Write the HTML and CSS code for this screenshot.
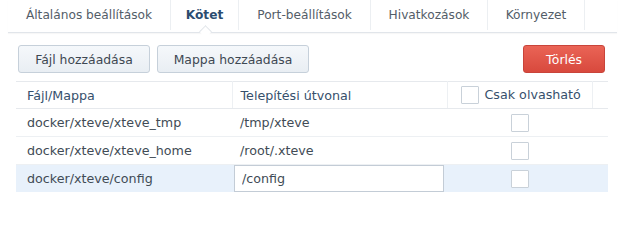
FILE: index.html
```html
<!DOCTYPE html>
<html>
<head>
  <title>Kötet</title>
  <link rel="stylesheet" href="styles.css">
</head>
<body>
  <div class="tabs">
    <div class="tab">Általános beállítások</div>
    <div class="tab active">Kötet</div>
    <div class="tab">Port-beállítások</div>
    <div class="tab">Hivatkozások</div>
    <div class="tab">Környezet</div>
  </div>

  <div class="content">
    <div class="toolbar">
      <button class="btn btn-file">Fájl hozzáadása</button>
      <button class="btn btn-folder">Mappa hozzáadása</button>
      <span class="spacer"></span>
      <button class="btn btn-red">Törlés</button>
    </div>

    <table class="grid">
      <colgroup>
        <col class="col-file">
        <col class="col-path">
        <col class="col-ro">
        <col class="col-end">
      </colgroup>
      <thead>
        <tr>
          <th>Fájl/Mappa</th>
          <th class="path">Telepítési útvonal</th>
          <th class="ro"><span class="check"></span>Csak olvasható</th>
          <th class="end"></th>
        </tr>
      </thead>
      <tbody>
        <tr>
          <td>docker/xteve/xteve_tmp</td>
          <td class="path">/tmp/xteve</td>
          <td class="center"><span class="check"></span></td>
          <td></td>
        </tr>
        <tr>
          <td>docker/xteve/xteve_home</td>
          <td class="path">/root/.xteve</td>
          <td class="center"><span class="check"></span></td>
          <td></td>
        </tr>
        <tr class="selected">
          <td>docker/xteve/config</td>
          <td class="edit"><input class="field" type="text" value="/config"></td>
          <td class="center"><span class="check"></span></td>
          <td></td>
        </tr>
      </tbody>
    </table>
  </div>
</body>
</html>
```

FILE: styles.css
```css
body {
  margin: 0;
  background: #fff;
  font-family: "DejaVu Sans", Verdana, sans-serif;
  font-size: 12px;
  color: #414b55;
}

/* tabs */
.tabs {
  display: flex;
  margin: 0 7px 0 8px;
  height: 32px;
  border-bottom: 1px solid #e1e5ea;
  box-shadow: 0 1px 1px rgba(0, 0, 0, 0.03);
}
.tab {
  position: relative;
  display: flex;
  align-items: center;
  justify-content: center;
  height: 30px;
  border-right: 1px solid #eceff2;
  color: #535d68;
  font-size: 12.2px;
}
.tab:nth-child(1) { width: 162px; }
.tab:nth-child(2) { width: 67px; }
.tab:nth-child(3) { width: 131px; }
.tab:nth-child(4) { width: 116px; }
.tab:nth-child(5) { width: 96px; }
.tab.active {
  font-weight: bold;
  color: #2b4c70;
}
.tab.active::after {
  content: "";
  position: absolute;
  left: 50%;
  bottom: -6px;
  width: 8px;
  height: 8px;
  margin-left: -4px;
  background: #fff;
  border-left: 1px solid #e1e5ea;
  border-top: 1px solid #e1e5ea;
  transform: rotate(45deg);
}

.content {
  margin: 0 16px;
}

/* toolbar */
.toolbar {
  display: flex;
  gap: 7px;
  margin: 12px 3px 8px 2px;
}
.spacer { flex: 1; }
.btn {
  height: 28px;
  padding: 0 10px;
  border: 1px solid #c6d0da;
  border-radius: 3px;
  background: linear-gradient(#f5f8fb, #e9eef3);
  font-family: inherit;
  font-size: 12.4px;
  color: #3e4852;
}
.btn-file { width: 132px; }
.btn-folder { width: 152px; }
.btn-red {
  width: 82px;
  border-color: #c9443a;
  background: linear-gradient(#ea6456, #d8493d);
  color: #fff;
}

/* grid */
.grid {
  width: 592px;
  border-collapse: collapse;
  table-layout: fixed;
  border-top: 1px solid #e6e9ed;
  font-size: 12.7px;
}
.col-file { width: 216px; }
.col-path { width: 215px; }
.col-ro { width: 145px; }
.col-end { width: 16px; }
.grid th,
.grid td {
  height: 27px;
  padding: 0 0 0 11px;
  border-bottom: 1px solid #edf0f3;
  text-align: left;
  font-weight: normal;
  white-space: nowrap;
  overflow: hidden;
}
.grid th {
  height: 26px;
  color: #36506c;
  border-bottom-color: #e6e9ed;
  border-right: 1px solid #edf0f3;
}
.grid th.end { border-right: none; }
.grid .path { padding-left: 8px; }
.grid th.ro { padding-left: 13px; }
.grid th .check {
  margin-right: 6px;
}
.check {
  display: inline-block;
  width: 16px;
  height: 16px;
  border: 1px solid #c9d1d9;
  border-radius: 1px;
  background: #fff;
  vertical-align: middle;
}
.grid td.center {
  padding: 0;
  text-align: center;
}
.grid tr.selected td {
  background: #e8f1fb;
  border-bottom-color: #fff;
}
.grid td.edit {
  padding: 0 3px 0 2px;
}
.field {
  box-sizing: border-box;
  display: block;
  width: 100%;
  height: 27px;
  margin: 0;
  padding: 0 7px;
  border: 1px solid #c3ccd6;
  background: #fff;
  font-family: inherit;
  font-size: 12.7px;
  color: #414b55;
}
```
